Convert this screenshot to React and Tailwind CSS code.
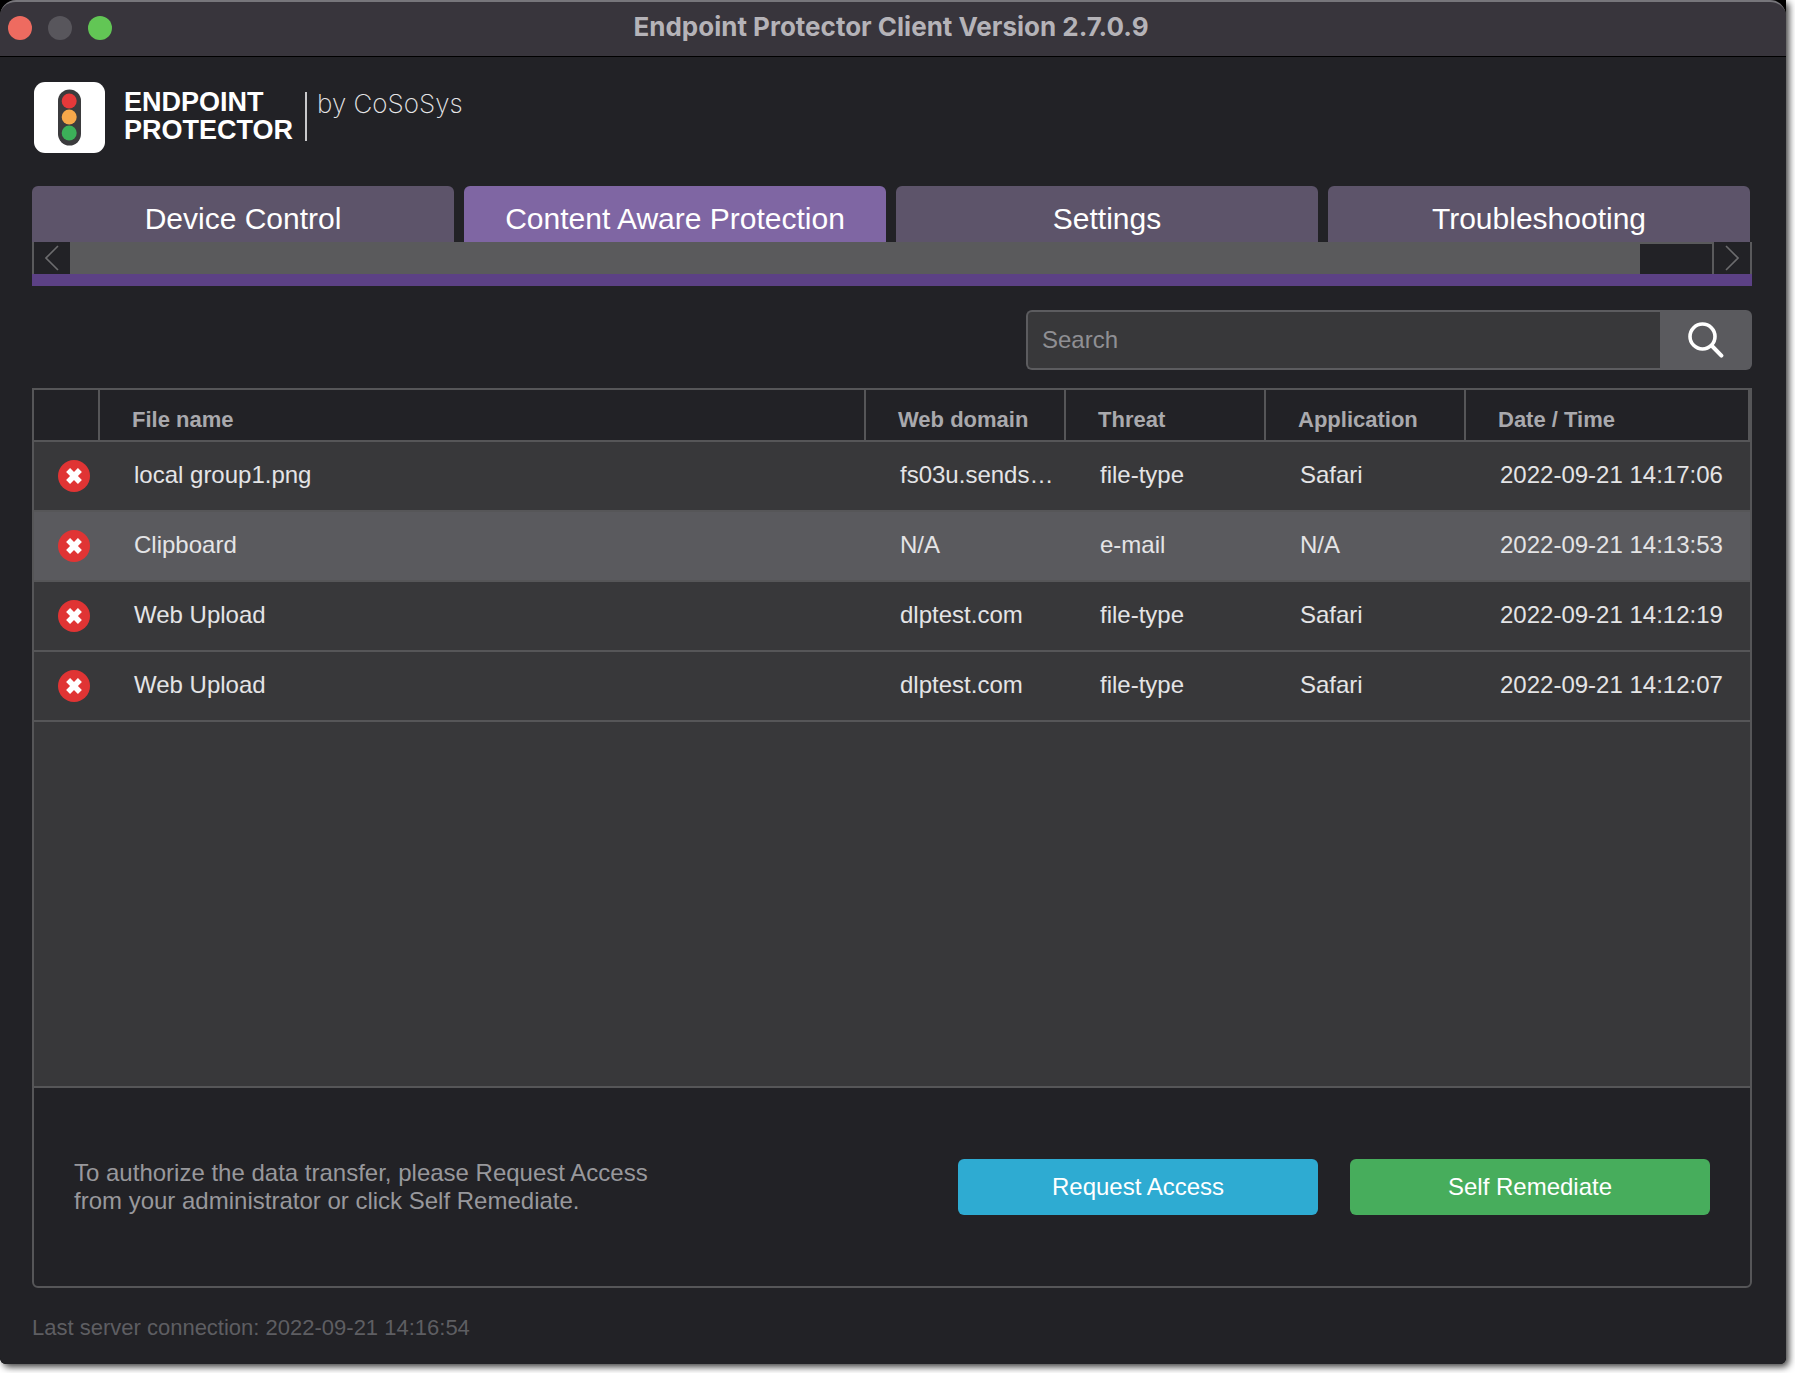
import React, { useState } from 'react';
import clsx from 'clsx';

const tabs = ['Device Control', 'Content Aware Protection', 'Settings', 'Troubleshooting'];

const events = [
  { id: 1, file: 'local group1.png', domain: 'fs03u.sends…', threat: 'file-type', app: 'Safari', date: '2022-09-21 14:17:06' },
  { id: 2, file: 'Clipboard', domain: 'N/A', threat: 'e-mail', app: 'N/A', date: '2022-09-21 14:13:53' },
  { id: 3, file: 'Web Upload', domain: 'dlptest.com', threat: 'file-type', app: 'Safari', date: '2022-09-21 14:12:19' },
  { id: 4, file: 'Web Upload', domain: 'dlptest.com', threat: 'file-type', app: 'Safari', date: '2022-09-21 14:12:07' },
];

const BlockedIcon = () => (
  <svg viewBox="0 0 32 32" className="block w-8 h-8" role="img" aria-label="Blocked">
    <circle cx="16" cy="16" r="16" fill="#e03434" />
    <path d="M10.1 10.1 21.9 21.9M21.9 10.1 10.1 21.9" stroke="#fff" strokeWidth="5.6" />
  </svg>
);

const Logo = () => (
  <div className="flex items-start">
    <svg viewBox="0 0 72 72" className="w-[72px] h-[72px] ml-0.5" aria-hidden="true">
      <rect width="71" height="71" rx="11" fill="#fff" />
      <rect x="24" y="7.5" width="23" height="56" rx="11.5" fill="#3b3b3d" />
      <circle cx="35.2" cy="19" r="7.5" fill="#e5393a" />
      <circle cx="35.2" cy="35" r="7.5" fill="#f6a84a" />
      <circle cx="35.2" cy="51" r="7.5" fill="#3cb059" />
    </svg>
    <p className="ml-[18px] mt-1.5 text-[27px] leading-7 font-bold text-white">
      ENDPOINT
      <br />
      PROTECTOR
    </p>
    <div className="w-0.5 h-[49px] mt-2.5 ml-3 bg-[#c9c9cb]"></div>
    <p className="ml-2.5 mt-2 font-['Inter'] font-extralight text-[26px] leading-7 text-[#e6e6e8]">by CoSoSys</p>
  </div>
);

const TitleBar = () => (
  <div className="flex items-center h-[57px] px-2 pb-0.5 rounded-t-2xl border-t-2 border-t-[#77767b] border-b border-b-black bg-[#38353c]">
    <div className="flex gap-4">
      <button aria-label="Close" className="w-6 h-6 rounded-full bg-[#ee6b60]"></button>
      <button aria-label="Minimize" className="w-6 h-6 rounded-full bg-[#58565c]"></button>
      <button aria-label="Zoom" className="w-6 h-6 rounded-full bg-[#62c655]"></button>
    </div>
    <h1 className="flex-1 pr-[108px] pb-0.5 text-center font-['Inter'] font-bold text-[26px] leading-8 text-[#b5b3b8]">
      Endpoint Protector Client Version 2.7.0.9
    </h1>
  </div>
);

// Horizontal scroller that sits between the tabs and the purple rule
const TabScroller = () => (
  <div className="flex h-8 border-x-2 border-[#5a5a5c] bg-[#5a5a5c]">
    <button aria-label="Scroll left" className="flex items-center justify-center w-9 bg-[#222226]">
      <svg viewBox="0 0 14 26" className="w-3.5 h-[26px]" fill="none" stroke="#6c6c6e" strokeWidth="1.6">
        <path d="M13 1 1 13l12 12" />
      </svg>
    </button>
    <div className="flex-1"></div>
    <div className="w-[72px] mt-0.5 mr-0.5 bg-[#222226]"></div>
    <button aria-label="Scroll right" className="flex items-center justify-center w-9 bg-[#222226]">
      <svg viewBox="0 0 14 26" className="w-3.5 h-[26px]" fill="none" stroke="#6c6c6e" strokeWidth="1.6">
        <path d="m1 1 12 12L1 25" />
      </svg>
    </button>
  </div>
);

const headCell = 'h-[52px] pt-2.5 pb-0 pl-8 text-left text-[22px] leading-6 font-bold text-[#a9a9ad] border-b-2 border-r-2 border-[#565658]';
const bodyCell = 'h-[70px] pb-0.5 pl-[34px] whitespace-nowrap border-b-2 border-[#565658]';

const App = () => {
  const [activeTab, setActiveTab] = useState('Content Aware Protection');
  const [selected, setSelected] = useState(2);
  const [query, setQuery] = useState('');

  const rows = events.filter((e) => e.file.toLowerCase().includes(query.toLowerCase()));

  return (
    <div className="flex min-h-screen pr-[9px] pb-[9px] bg-white font-['Liberation_Sans',Arial,sans-serif]">
      <div className="flex flex-col flex-1 min-w-0 bg-black rounded-b-md shadow-[3px_3px_7px_rgba(0,0,0,0.75)]">
        <TitleBar />

        <main className="flex flex-col flex-1 pt-[25px] pb-5 pl-8 pr-[34px] rounded-b-md bg-[#222226]">
          <Logo />

          {/* Tabs */}
          <nav className="mt-8 border-b-12 border-[#5c4185]">
            <div className="grid grid-cols-4 gap-2.5 pr-0.5">
              {tabs.map((tab) => (
                <button
                  key={tab}
                  onClick={() => setActiveTab(tab)}
                  className={clsx(
                    'h-14 pt-2.5 rounded-t-md text-[30px] leading-[46px] text-white whitespace-nowrap',
                    tab === activeTab ? 'bg-[#7f66a3]' : 'bg-[#5d546a]'
                  )}
                >
                  {tab}
                </button>
              ))}
            </div>
            <TabScroller />
          </nav>

          {/* Search */}
          <form className="flex self-end w-[726px] h-[60px] mt-6" onSubmit={(e) => e.preventDefault()}>
            <input
              type="text"
              aria-label="Search"
              placeholder="Search"
              value={query}
              onChange={(e) => setQuery(e.target.value)}
              className="flex-1 min-w-0 pl-3.5 rounded-l-md border-2 border-r-0 border-[#5c5c5f] bg-[#38383a] text-2xl text-[#e4e4e6] placeholder:text-[#8f8f93] outline-none"
            />
            <button aria-label="Run search" className="flex items-center justify-center w-[92px] rounded-r-md bg-[#5a5a5e]">
              <svg viewBox="0 0 36 36" className="w-9 h-9" fill="none" stroke="#fff">
                <circle cx="14.5" cy="14.5" r="12.5" strokeWidth="3.6" />
                <path d="m24 24 9.4 9.6" strokeWidth="4" strokeLinecap="round" />
              </svg>
            </button>
          </form>

          {/* Events */}
          <section className="flex flex-col flex-1 mt-[18px] rounded-b-md border-2 border-[#565658]">
            <div className="flex-1 bg-[#38383a]">
              <table className="w-full table-fixed border-separate border-spacing-0">
                <thead className="bg-[#222226]">
                  <tr>
                    <th aria-label="Status" className={clsx(headCell, 'w-[66px]')}></th>
                    <th className={headCell}>File name</th>
                    <th className={clsx(headCell, 'w-[200px]')}>Web domain</th>
                    <th className={clsx(headCell, 'w-[200px]')}>Threat</th>
                    <th className={clsx(headCell, 'w-[200px]')}>Application</th>
                    <th className={clsx(headCell, 'w-[284px]')}>Date / Time</th>
                  </tr>
                </thead>
                <tbody className="text-2xl text-[#e4e4e6]">
                  {rows.map((e) => (
                    <tr
                      key={e.id}
                      onClick={() => setSelected(e.id)}
                      className={clsx(e.id === selected && 'bg-[#5a5a5e]')}
                    >
                      <td className="h-[70px] pl-6 border-b-2 border-[#565658]">
                        <BlockedIcon />
                      </td>
                      <td className={bodyCell}>{e.file}</td>
                      <td className={bodyCell}>{e.domain}</td>
                      <td className={bodyCell}>{e.threat}</td>
                      <td className={bodyCell}>{e.app}</td>
                      <td className={bodyCell}>{e.date}</td>
                    </tr>
                  ))}
                </tbody>
              </table>
            </div>

            <div className="flex items-center justify-between h-[200px] px-10 border-t-2 border-[#565658] text-2xl">
              <p className="leading-7 text-[#98989c]">
                To authorize the data transfer, please Request Access
                <br />
                from your administrator or click Self Remediate.
              </p>
              <div className="flex gap-8 text-white">
                <button className="w-[360px] h-14 rounded-md bg-[#2eabd2]">Request Access</button>
                <button className="w-[360px] h-14 rounded-md bg-[#47ad5c]">Self Remediate</button>
              </div>
            </div>
          </section>

          <p className="mt-6 text-[22px] leading-8 text-[#5e5e62]">Last server connection: 2022-09-21 14:16:54</p>
        </main>
      </div>
    </div>
  );
};

export default App;
